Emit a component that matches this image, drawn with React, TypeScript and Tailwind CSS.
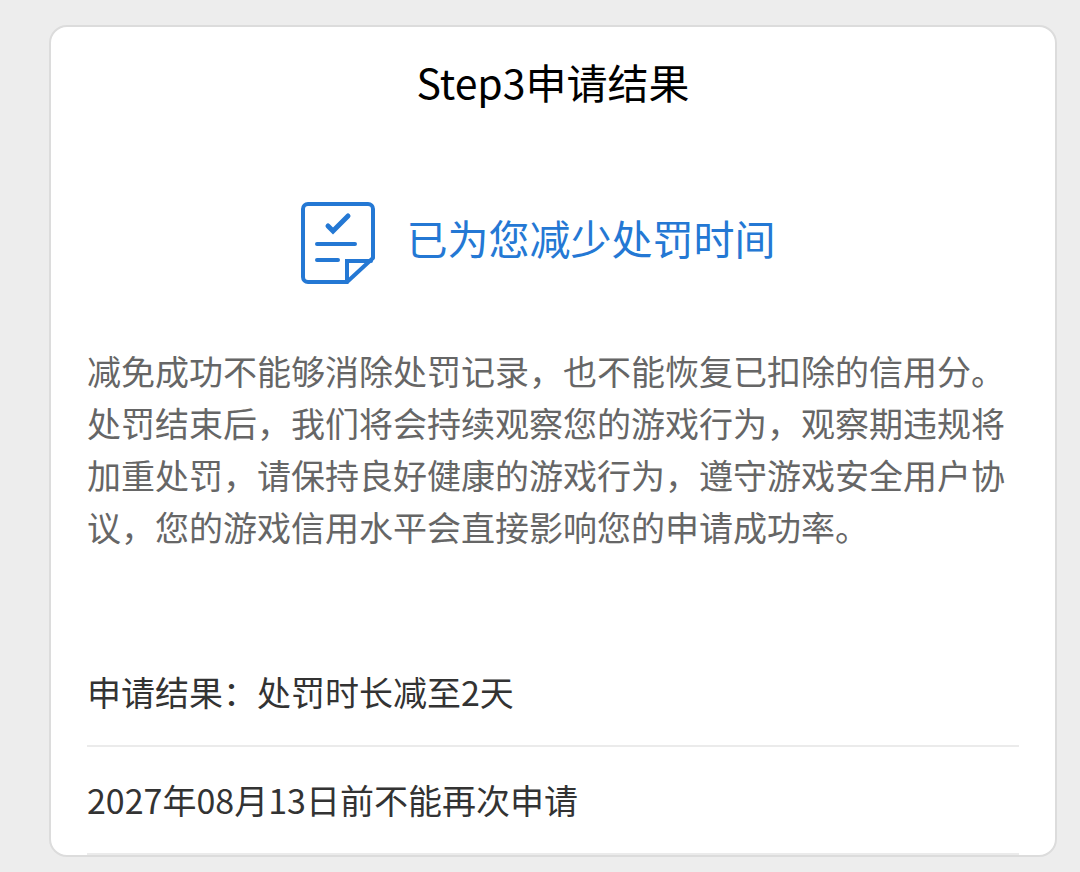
const results = [
  '申请结果：处罚时长减至2天',
  '2027年08月13日前不能再次申请',
];

function NoteCheckIcon() {
  return (
    <svg
      viewBox="0 0 76 84"
      className="w-[76px] h-[84px] shrink-0"
      fill="none"
      stroke="currentColor"
      strokeWidth="4"
      strokeLinecap="round"
      strokeLinejoin="round"
      aria-hidden="true"
    >
      <path d="M48 81H9a5 5 0 0 1-5-5V8a5 5 0 0 1 5-5h60a5 5 0 0 1 5 5v49z" />
      <path d="M48 81V60h24" strokeLinejoin="miter" />
      <path d="M18 43h38M18 59h21" />
      <path d="M29 25l5 5 15-15" strokeWidth="5" strokeLinejoin="miter" />
    </svg>
  );
}

export default function App() {
  return (
    <main className="min-h-screen bg-[#ededed] pt-[25px] pr-[23px] pb-4 pl-[49px] font-['Noto_Sans_CJK_SC',sans-serif]">
      <section className="bg-white border-2 border-[#dcdcdc] rounded-[18px] px-9 pt-7">
        <h1 className="text-[41px] leading-[52px] text-center text-black">Step3申请结果</h1>

        {/* Status */}
        <div className="mt-[94px] mr-8 flex items-center justify-center gap-8 text-[#2478d4]">
          <NoteCheckIcon />
          <h2 className="pb-3 text-[41px] leading-[52px]">已为您减少处罚时间</h2>
        </div>

        <p className="mt-[60px] text-[34px] leading-[52px] text-[#666]">
          减免成功不能够消除处罚记录，也不能恢复已扣除的信用分。处罚结束后，我们将会持续观察您的游戏行为，观察期违规将加重处罚，请保持良好健康的游戏行为，遵守游戏安全用户协议，您的游戏信用水平会直接影响您的申请成功率。
        </p>

        {/* Result rows */}
        <ul className="mt-[86px] text-[34px] leading-[52px] text-[#333]">
          {results.map((text) => (
            <li key={text} className="py-[27px] border-b-2 border-[#ebebeb]">
              {text}
            </li>
          ))}
        </ul>
      </section>
    </main>
  );
}
